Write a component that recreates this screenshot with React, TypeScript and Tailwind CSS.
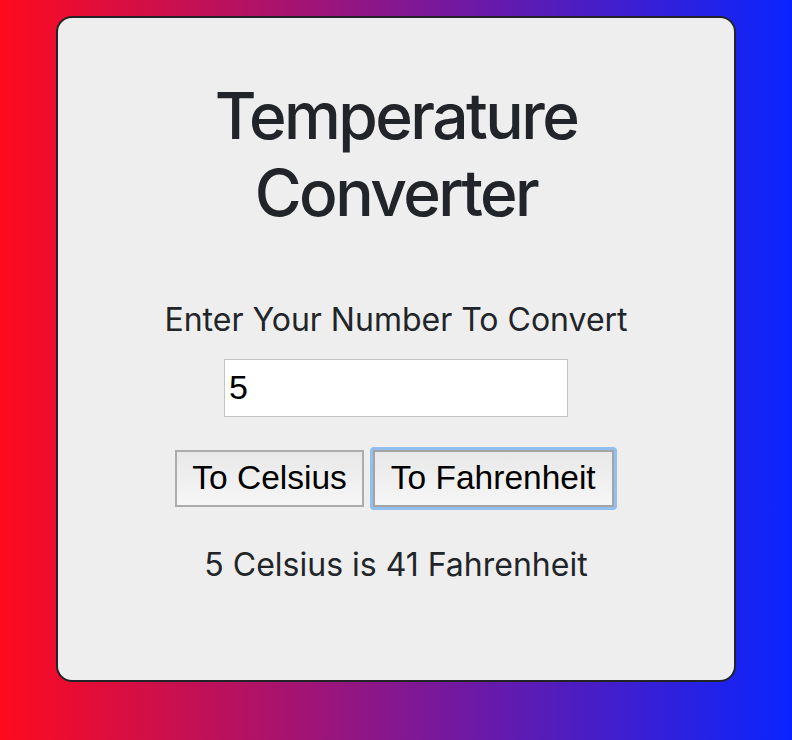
import React, { useState } from 'react';

export default function App() {
  const [value, setValue] = useState('5');
  const [result, setResult] = useState('5 Celsius is 41 Fahrenheit');

  const toCelsius = () => {
    const n = parseFloat(value);
    if (isNaN(n)) return;
    const c = Math.round(((n - 32) * 5) / 9);
    setResult(`${n} Fahrenheit is ${c} Celsius`);
  };

  const toFahrenheit = () => {
    const n = parseFloat(value);
    if (isNaN(n)) return;
    const f = Math.round((n * 9) / 5 + 32);
    setResult(`${n} Celsius is ${f} Fahrenheit`);
  };

  return (
    <div className="w-full h-[740px] bg-[linear-gradient(to_right,#ff0a1e,#0a24ff)] pt-4 font-['Inter',sans-serif] text-[#212529]">
      {/* Card */}
      <div className="mx-auto w-[680px] h-[666px] bg-[#eeeeee] border-2 border-[#222326] rounded-[16px] flex flex-col items-center pt-[60px]">
        <h1 className="text-[64px] leading-[1.2] font-medium tracking-[-0.04em] text-center w-[420px]">
          Temperature Converter
        </h1>

        <p className="mt-[64px] text-[32px] leading-[1.5]">Enter Your Number To Convert</p>

        <input
          type="text"
          value={value}
          onChange={(e) => setValue(e.target.value)}
          className="mt-[15px] w-[344px] h-[58px] bg-white border border-[#c4c4c4] px-1 text-[34px] text-black font-['Liberation_Sans',Arial,sans-serif] outline-none"
        />

        <div className="mt-[30px] flex items-center gap-[6px] font-['Liberation_Sans',Arial,sans-serif]">
          <button
            type="button"
            onClick={toCelsius}
            className="h-[57px] px-[15px] border-2 border-[#acacac] bg-gradient-to-b from-[#e8e8e8] to-[#f6f6f6] text-[33.5px] text-black"
          >
            To Celsius
          </button>
          <button
            type="button"
            onClick={toFahrenheit}
            className="h-[63px] p-[3px] rounded-[4px] bg-[#93bff0]"
          >
            <span className="flex items-center h-full px-[16px] border-2 border-[#a4a4a4] bg-gradient-to-b from-[#e8e8e8] to-[#f6f6f6] text-[33.5px] text-black">
              To Fahrenheit
            </span>
          </button>
        </div>

        <p className="mt-[31px] text-[32px] leading-[1.5]">{result}</p>
      </div>
    </div>
  );
}
